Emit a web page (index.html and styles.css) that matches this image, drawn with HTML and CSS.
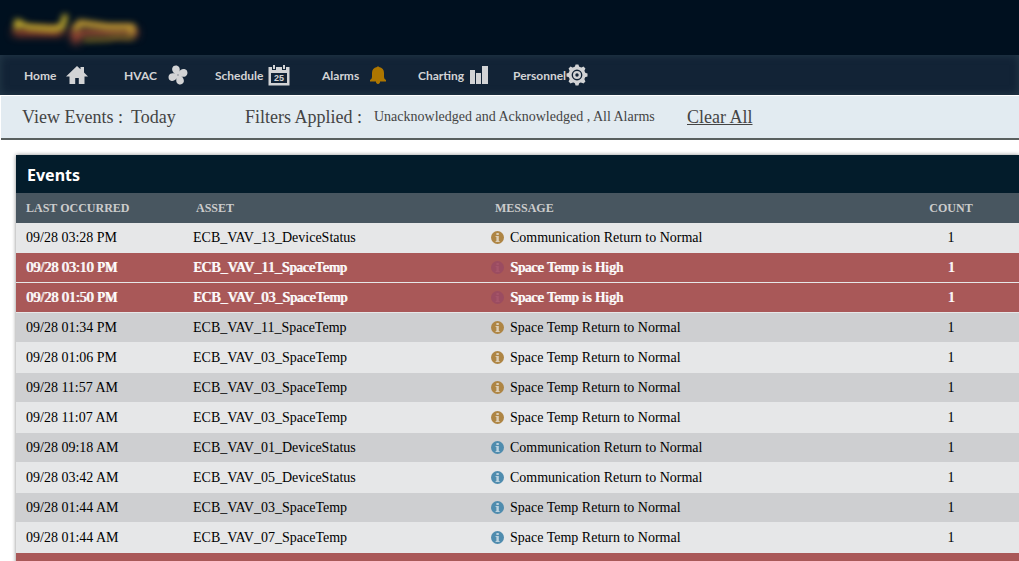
FILE: index.html
```html
<!DOCTYPE html>
<html lang="en">
<head>
<meta charset="utf-8">
<title>Events</title>
<link rel="stylesheet" href="styles.css">
</head>
<body>
<svg class="sprite" aria-hidden="true">
  <symbol id="info" viewBox="0 0 13 13">
    <circle cx="6.5" cy="6.5" r="6.5" fill="currentColor"/>
    <path class="info-mark" d="M5.400 2H7.800V4H5.400zM4.600 5H7.800V10H8.600V11H4.600V10H5.400V6H4.600z"/>
  </symbol>
</svg>
<div class="app">
  <header class="brand">
    <svg class="logo" width="136" height="40" viewBox="0 0 136 40" role="img" aria-label="Company logo">
      <g class="logo-back">
        <path d="M6 24H50" stroke="#a8442c" stroke-width="7"/>
        <path d="M64 24L66 32M72 25H124" stroke="#a34a34" stroke-width="8"/>
      </g>
      <g class="logo-front">
        <path d="M7 14V19M8 14L17 19L30 20L44 21L52 19L55 9" stroke="#c0aa2e" stroke-width="6"/>
        <path d="M66 20L70 15L84 17L98 19L122 19V23" stroke="#b99432" stroke-width="7"/>
        <path d="M75 32L98 31L106 29L122 30" stroke="#6f6a20" stroke-width="4"/>
      </g>
    </svg>
  </header>
  <nav class="nav" aria-label="Main">
    <a class="nav-link" href="#home">Home
      <svg width="22" height="20" viewBox="0 0 22 20"><path fill="currentColor" d="M11 1L14.500 4.300V2H18V7.500L22 11.500H18.500V19H12.800V13H9.200V19H3.500V11.500H0z"/></svg>
    </a>
    <a class="nav-link" href="#hvac">HVAC
      <svg width="20" height="20" viewBox="0 0 20 20"><g fill="currentColor"><path id="blade" d="M9 10.500C5.500 8.500 3.500 6 4.300 3C5.200 0 9.500 -.3 11.200 2.300C12.400 4.500 11.400 6.700 11 10z"/><use href="#blade" transform="rotate(90 10 10)"/><use href="#blade" transform="rotate(180 10 10)"/><use href="#blade" transform="rotate(270 10 10)"/></g><circle cx="10" cy="10" r=".8" fill="#7d858e"/></svg>
    </a>
    <a class="nav-link nav-link-wide" href="#schedule">Schedule
      <svg width="22" height="22" viewBox="0 0 22 22"><path fill="currentColor" fill-rule="evenodd" d="M1 3H4V6H8V3H14V6H18V3H21.500V21.500H.5V3zM3 9V19H19V9z"/><path fill="currentColor" d="M5 1H7V5H5zM15 1H17V5H15z"/><text class="calendar-day" x="11" y="17" text-anchor="middle">25</text></svg>
    </a>
    <a class="nav-link" href="#alarms">Alarms
      <svg class="bell" width="16" height="20" viewBox="0 0 16 20"><path fill="currentColor" d="M7 2Q8 .5 9 2Q14 3 14 8V12Q14 14 16 15V16.500H10V17.500Q8 20.500 6 17.500V16.500H0V15Q2 14 2 12V8Q2 3 7 2z"/></svg>
    </a>
    <a class="nav-link nav-link-mid" href="#charting">Charting
      <svg width="18" height="20" viewBox="0 0 18 20"><path fill="currentColor" d="M0 5H5V19H0zM6 8H11V19H6zM12 1H18V19H12z"/></svg>
    </a>
    <a class="nav-link nav-link-wide" href="#personnel">Personnel
      <svg width="22" height="22" viewBox="0 0 22 22"><g fill="currentColor"><circle cx="11" cy="11" r="8.500"/><path id="teeth" d="M8.700 3L9.600 .5H12.400L13.300 3V19L12.400 21.500H9.600L8.700 19z"/><use href="#teeth" transform="rotate(45 11 11)"/><use href="#teeth" transform="rotate(90 11 11)"/><use href="#teeth" transform="rotate(135 11 11)"/></g><circle cx="11" cy="11" r="4.700" fill="none" stroke="#122336" stroke-width="1.400"/><circle cx="11" cy="11" r="1.700" fill="#122336"/></svg>
    </a>
  </nav>
  <section class="filters" aria-label="Filters">
    <span class="filter-view"><span>View Events :</span><span>Today</span></span>
    <span class="filter-label">Filters Applied :</span>
    <span class="filter-value">Unacknowledged and Acknowledged , All Alarms</span>
    <a class="filter-clear" href="#clear">Clear All</a>
  </section>
  <main class="panel">
    <h1 class="panel-title">Events</h1>
    <table class="events">
      <colgroup><col class="col-time"><col class="col-asset"><col><col class="col-count"></colgroup>
      <thead><tr><th>LAST OCCURRED</th><th>ASSET</th><th>MESSAGE</th><th class="count">COUNT</th></tr></thead>
      <tbody>
        <tr><td>09/28 03:28 PM</td><td>ECB_VAV_13_DeviceStatus</td><td><svg class="info info-gold"><use href="#info"/></svg>Communication Return to Normal</td><td class="count">1</td></tr>
        <tr class="alert"><td>09/28 03:10 PM</td><td>ECB_VAV_11_SpaceTemp</td><td><svg class="info info-plum"><use href="#info"/></svg>Space Temp is High</td><td class="count">1</td></tr>
        <tr class="alert"><td>09/28 01:50 PM</td><td>ECB_VAV_03_SpaceTemp</td><td><svg class="info info-plum"><use href="#info"/></svg>Space Temp is High</td><td class="count">1</td></tr>
        <tr><td>09/28 01:34 PM</td><td>ECB_VAV_11_SpaceTemp</td><td><svg class="info info-gold"><use href="#info"/></svg>Space Temp Return to Normal</td><td class="count">1</td></tr>
        <tr><td>09/28 01:06 PM</td><td>ECB_VAV_03_SpaceTemp</td><td><svg class="info info-gold"><use href="#info"/></svg>Space Temp Return to Normal</td><td class="count">1</td></tr>
        <tr><td>09/28 11:57 AM</td><td>ECB_VAV_03_SpaceTemp</td><td><svg class="info info-gold"><use href="#info"/></svg>Space Temp Return to Normal</td><td class="count">1</td></tr>
        <tr><td>09/28 11:07 AM</td><td>ECB_VAV_03_SpaceTemp</td><td><svg class="info info-gold"><use href="#info"/></svg>Space Temp Return to Normal</td><td class="count">1</td></tr>
        <tr><td>09/28 09:18 AM</td><td>ECB_VAV_01_DeviceStatus</td><td><svg class="info info-blue"><use href="#info"/></svg>Communication Return to Normal</td><td class="count">1</td></tr>
        <tr><td>09/28 03:42 AM</td><td>ECB_VAV_05_DeviceStatus</td><td><svg class="info info-blue"><use href="#info"/></svg>Communication Return to Normal</td><td class="count">1</td></tr>
        <tr><td>09/28 01:44 AM</td><td>ECB_VAV_03_SpaceTemp</td><td><svg class="info info-blue"><use href="#info"/></svg>Space Temp Return to Normal</td><td class="count">1</td></tr>
        <tr><td>09/28 01:44 AM</td><td>ECB_VAV_07_SpaceTemp</td><td><svg class="info info-blue"><use href="#info"/></svg>Space Temp Return to Normal</td><td class="count">1</td></tr>
        <tr class="alert"><td></td><td></td><td></td><td></td></tr>
      </tbody>
    </table>
  </main>
</div>
</body>
</html>
```
FILE: styles.css
```css
* { box-sizing: border-box; }
body {
  margin: 0;
  background: #fff;
  color: #000;
  font-family: "Liberation Serif", "Times New Roman", serif;
  font-size: 14px;
}
.sprite { display: none; }
.app { height: 100vh; overflow: hidden; }
.brand { display: flex; height: 55px; padding: 8px 10px; background: #00101f; }
.logo { overflow: visible; fill: none; stroke-linecap: round; stroke-linejoin: round; }
.logo-back { filter: blur(4px); }
.logo-front { filter: blur(3px); }
.nav {
  display: grid;
  grid-template-columns: 100px 91px 107px 96px 95px 76px;
  align-items: center;
  height: 40px;
  padding-left: 24px;
  background: #122336;
  box-shadow: inset 0 0 8px #263b4a;
}
.nav-link {
  display: flex;
  align-items: center;
  justify-content: space-between;
  width: 64px;
  color: #d2d3d5;
  font-family: Lato, sans-serif;
  font-size: 12px;
  font-weight: bold;
  text-decoration: none;
}
.nav-link svg { flex: none; }
.nav-link-mid { width: 70px; }
.nav-link-wide { width: 75px; }
.bell { color: #ad7600; }
.calendar-day { fill: currentColor; font: bold 9px "Liberation Sans", sans-serif; }
.filters {
  display: flex;
  align-items: center;
  height: 44px;
  margin: 1px 0 0 1px;
  padding-left: 21px;
  border-bottom: 2px solid #59605f;
  background: #e2ebf1;
  color: #444;
  font-size: 18px;
  white-space: nowrap;
}
.filter-view { display: flex; gap: 8px; width: 223px; }
.filter-label { width: 129px; }
.filter-value { width: 313px; font-size: 14px; }
.filter-clear { color: inherit; }
.panel { margin: 15px 0 0 16px; box-shadow: 0 0 4px #888; }
.panel-title {
  margin: 0;
  padding: 2px 11px 0;
  background: #031c2b;
  color: #fff;
  font: bold 16px/36px "Noto Sans", sans-serif;
}
.events { width: 100%; border-collapse: collapse; table-layout: fixed; }
.col-time { width: 167px; }
.col-asset { width: 299px; }
.col-count { width: 136px; }
.events th {
  height: 30px;
  padding: 0 13px;
  background: #485660;
  color: #ccc;
  font-size: 12px;
  text-align: left;
}
.events th:first-child, .events td:first-child { padding-left: 10px; }
.events td {
  height: 30px;
  padding: 0 10px;
  line-height: 28px;
  white-space: nowrap;
}
.events tbody tr { background: linear-gradient(#e6e7e8, #e6e7e8); }
.events tbody tr:nth-child(even) { background: linear-gradient(#cecfd1 29px, #e6e7e8 29px); }
.events tbody tr.alert { background: linear-gradient(#a95858 29px, #e6e7e8 29px); color: #fff; text-shadow: 1px 0 #fff; }
.events th.count, .events td.count { padding: 0; text-align: center; }
.info { width: 13px; height: 13px; margin: 0 6px 0 -1px; vertical-align: -2px; --mark: #dccfb8; }
.info-mark { fill: var(--mark); }
.info-gold { color: #ae8544; }
.info-plum { color: #9b4c61; --mark: #a5556a; }
.info-blue { color: #4f8cae; --mark: #bcd2df; }
```
